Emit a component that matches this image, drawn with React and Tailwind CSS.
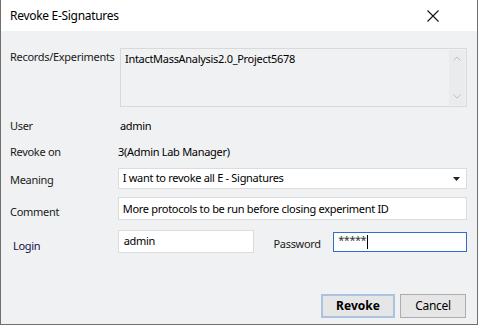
import React from 'react';

const font = { fontFamily: '"Noto Sans", "Liberation Sans", sans-serif' };

const Label = ({ children, className = '' }) => (
  <div className={`text-[11px] tracking-[-0.3px] text-[#1a1a1a] ${className}`}>{children}</div>
);

const Txt = ({ children, className = '' }) => (
  <span className={`text-[11px] tracking-[-0.3px] text-black ${className}`}>{children}</span>
);

const App = () => {
  return (
    <div className="w-[486px] h-[330px] bg-white" style={font}>
      <div className="w-[478px] h-[325px] border border-[#707070] border-t-0 flex flex-col bg-[#f0f1f3]">
        {/* Title bar */}
        <div className="h-[31px] bg-white flex items-center justify-between pl-[9px] pr-[30px]">
          <Txt className="text-[12px]">Revoke E-Signatures</Txt>
          <svg width="12" height="12" viewBox="0 0 12 12" className="mr-[8px]">
            <path d="M0.5 0.5 L11.5 11.5 M11.5 0.5 L0.5 11.5" stroke="#111" strokeWidth="1.1" />
          </svg>
        </div>

        {/* Body */}
        <div className="flex-1 flex flex-col pl-[9px] pr-[10px]">
          <div className="flex mt-[17px]">
            <Label className="w-[110px] pt-[1px]">Records/Experiments</Label>
            <div className="w-[347px] h-[59px] border border-[#d9d9d9] flex justify-between">
              <Txt className="pl-[4px] pt-[2px]">IntactMassAnalysis2.0_Project5678</Txt>
              <div className="w-[16px] m-[1px] bg-[#eaebed] flex flex-col justify-between items-center py-[6px]">
                <svg width="8" height="5" viewBox="0 0 8 5"><path d="M0.5 4.5 L4 1 L7.5 4.5" fill="none" stroke="#bfc1c4" /></svg>
                <svg width="8" height="5" viewBox="0 0 8 5"><path d="M0.5 0.5 L4 4 L7.5 0.5" fill="none" stroke="#bfc1c4" /></svg>
              </div>
            </div>
          </div>

          <div className="flex mt-[9px] h-[20px] items-center">
            <Label className="w-[110px]">User</Label>
            <Txt>admin</Txt>
          </div>

          <div className="flex mt-[6px] h-[20px] items-center">
            <Label className="w-[108px]">Revoke on</Label>
            <Txt>3(Admin Lab Manager)</Txt>
          </div>

          <div className="flex mt-[6px] items-center">
            <Label className="w-[108px] pt-[3px]">Meaning</Label>
            <div className="w-[350px] h-[21px] bg-white border border-[#dcdcdc] flex items-center justify-between pl-[4px] pr-[6px]">
              <Txt>I want to revoke all E - Signatures</Txt>
              <svg width="7" height="4" viewBox="0 0 7 4"><path d="M0 0 L7 0 L3.5 4 Z" fill="#222" /></svg>
            </div>
          </div>

          <div className="flex mt-[8px] items-center">
            <Label className="w-[108px] pt-[7px]">Comment</Label>
            <div className="w-[350px] h-[23px] bg-white border border-[#dcdcdc] flex items-center pl-[4px]">
              <Txt className="pt-[1px]">More protocols to be run before closing experiment ID</Txt>
            </div>
          </div>

          <div className="flex mt-[9px] items-start">
            <Label className="w-[108px] pl-[3px] pt-[8px] text-[#10104a]">Login</Label>
            <div className="w-[137px] h-[23px] bg-white border border-[#dcdcdc] flex items-center pl-[5px]">
              <Txt>admin</Txt>
            </div>
            <Label className="w-[79px] pl-[19px] pt-[6px]">Password</Label>
            <div className="w-[134px] h-[20px] mt-[2px] bg-white border border-[#2f6fc8] flex items-start pl-[4px] pt-[1px]">
              <span className="text-[11px] text-[#333] leading-[11px] tracking-[-0.5px]">*****</span>
              <span className="w-[1px] h-[14px] bg-black ml-[1px] mt-[1px]" />
            </div>
          </div>

          <div className="flex justify-end gap-[5px] mt-[40px] pr-[1px]">
            <button className="w-[74px] h-[24px] bg-[#e6e6e6] border-2 border-[#a9c3e0] text-[12px] font-bold text-black">
              Revoke
            </button>
            <button className="w-[66px] h-[24px] bg-[#e6e6e6] border border-[#adadad] text-[12px] tracking-[-0.3px] text-black">
              Cancel
            </button>
          </div>
        </div>
      </div>
    </div>
  );
};

export default App;
